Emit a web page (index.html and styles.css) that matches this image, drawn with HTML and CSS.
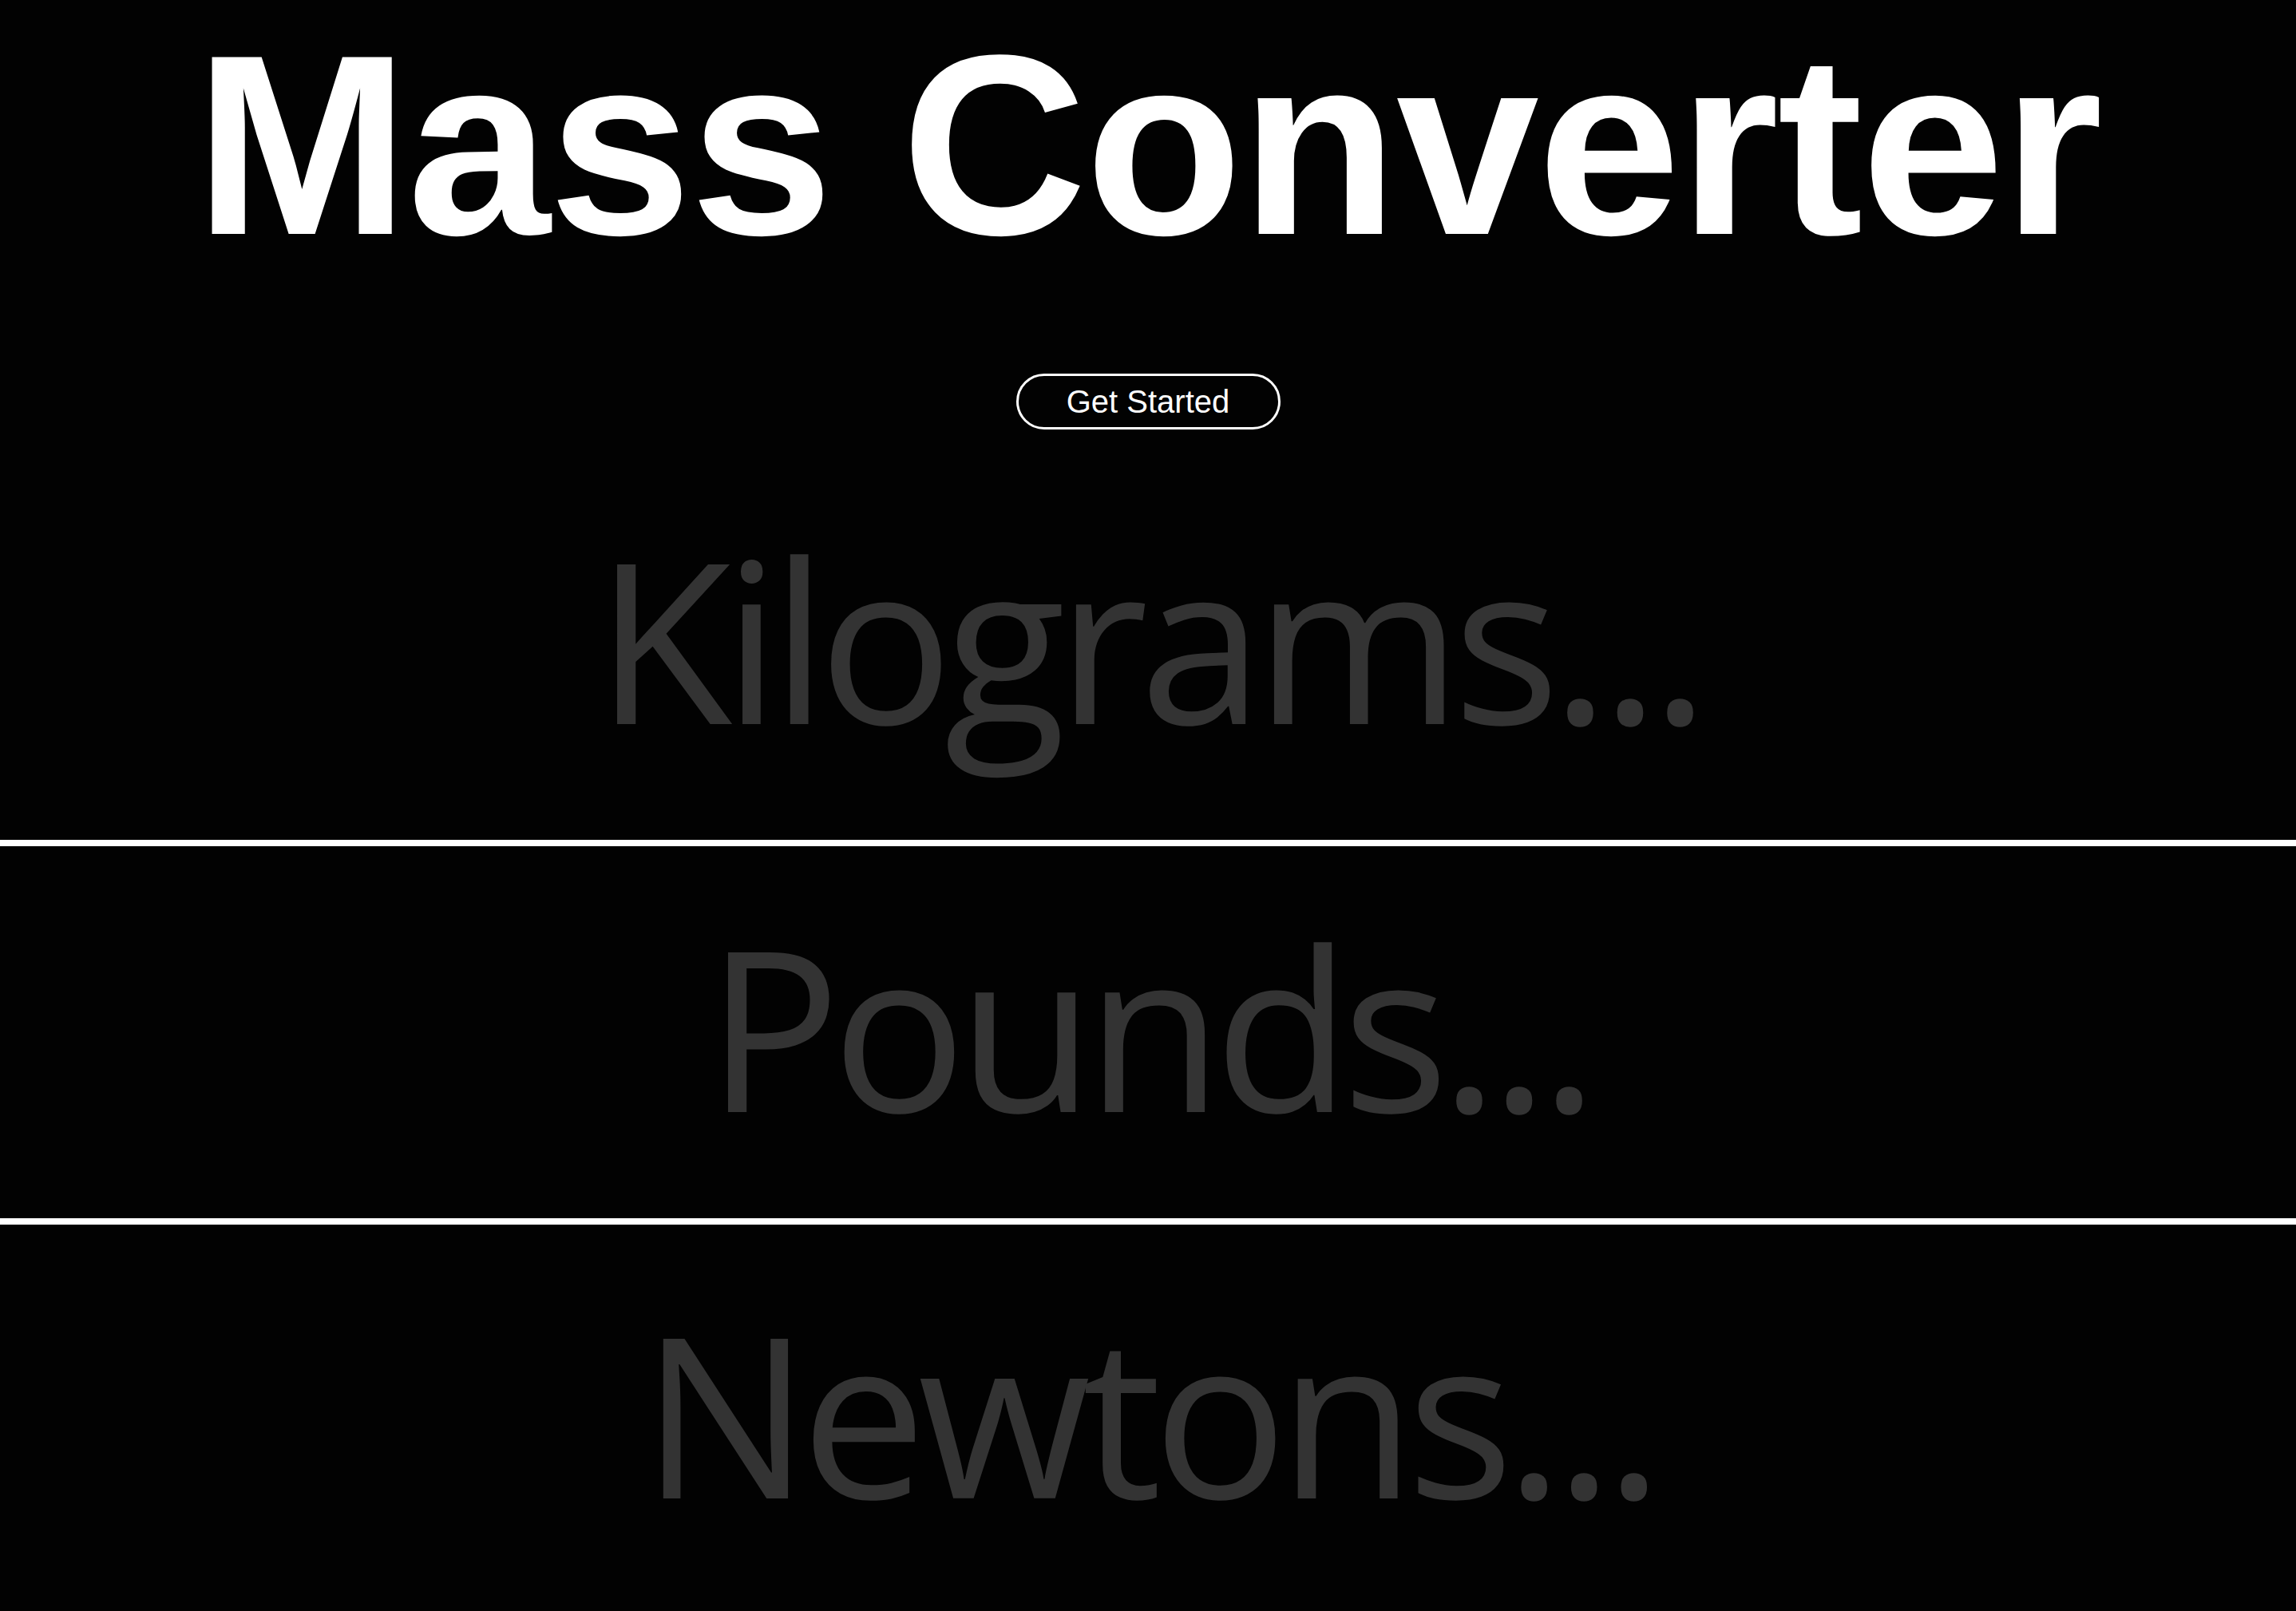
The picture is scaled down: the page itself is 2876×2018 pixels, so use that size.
FILE: index.html
```html
<!DOCTYPE html>
<html lang="en">
<head>
<meta charset="utf-8">
<title>Mass Converter</title>
<link rel="stylesheet" href="styles.css">
</head>
<body>
<header class="hero">
  <h1 class="title">Mass Converter</h1>
  <button class="start-btn" type="button">Get Started</button>
</header>
<main class="fields">
  <input class="unit unit-kg" type="text" placeholder="Kilograms...">
  <hr class="divider">
  <input class="unit unit-lb" type="text" placeholder="Pounds...">
  <hr class="divider">
  <input class="unit unit-n" type="text" placeholder="Newtons...">
</main>
</body>
</html>
```
FILE: styles.css
```css
html, body {
  margin: 0;
  padding: 0;
  background: #020202;
}

body {
  font-family: "Liberation Sans", Arial, Helvetica, sans-serif;
  color: #ffffff;
  overflow: hidden;
}

.hero {
  display: flex;
  flex-direction: column;
  align-items: center;
}

.title {
  margin: 21px 0 0 0;
  font-size: 322px;
  line-height: 322px;
  font-weight: 700;
  letter-spacing: -2px;
  color: #ffffff;
  text-align: center;
  white-space: nowrap;
}

.start-btn {
  margin-top: 125px;
  box-sizing: border-box;
  width: 331px;
  height: 70px;
  padding: 0;
  border: 3px solid #ffffff;
  border-radius: 35px;
  background: transparent;
  color: #ffffff;
  font-family: "Liberation Sans", Arial, Helvetica, sans-serif;
  font-size: 40px;
  line-height: 1;
}

.fields {
  display: flex;
  flex-direction: column;
}

.unit {
  display: block;
  box-sizing: content-box;
  width: 100%;
  height: 452px;
  margin: 0;
  border: 0;
  outline: none;
  background: transparent;
  color: #333333;
  font-family: "Open Sans", "Noto Sans", sans-serif;
  font-size: 280px;
  letter-spacing: -11px;
  text-align: center;
}

.unit::placeholder {
  color: #333333;
  opacity: 1;
}

.unit-kg {
  margin-top: 34px;
  padding: 0 0 28px 0;
}

.unit-lb {
  padding: 0 0 18px 0;
  height: 448px;
}

.unit-n {
  padding: 8px 0 0 0;
}

.divider {
  margin: 0;
  height: 8px;
  border: 0;
  background: #ffffff;
}
```
